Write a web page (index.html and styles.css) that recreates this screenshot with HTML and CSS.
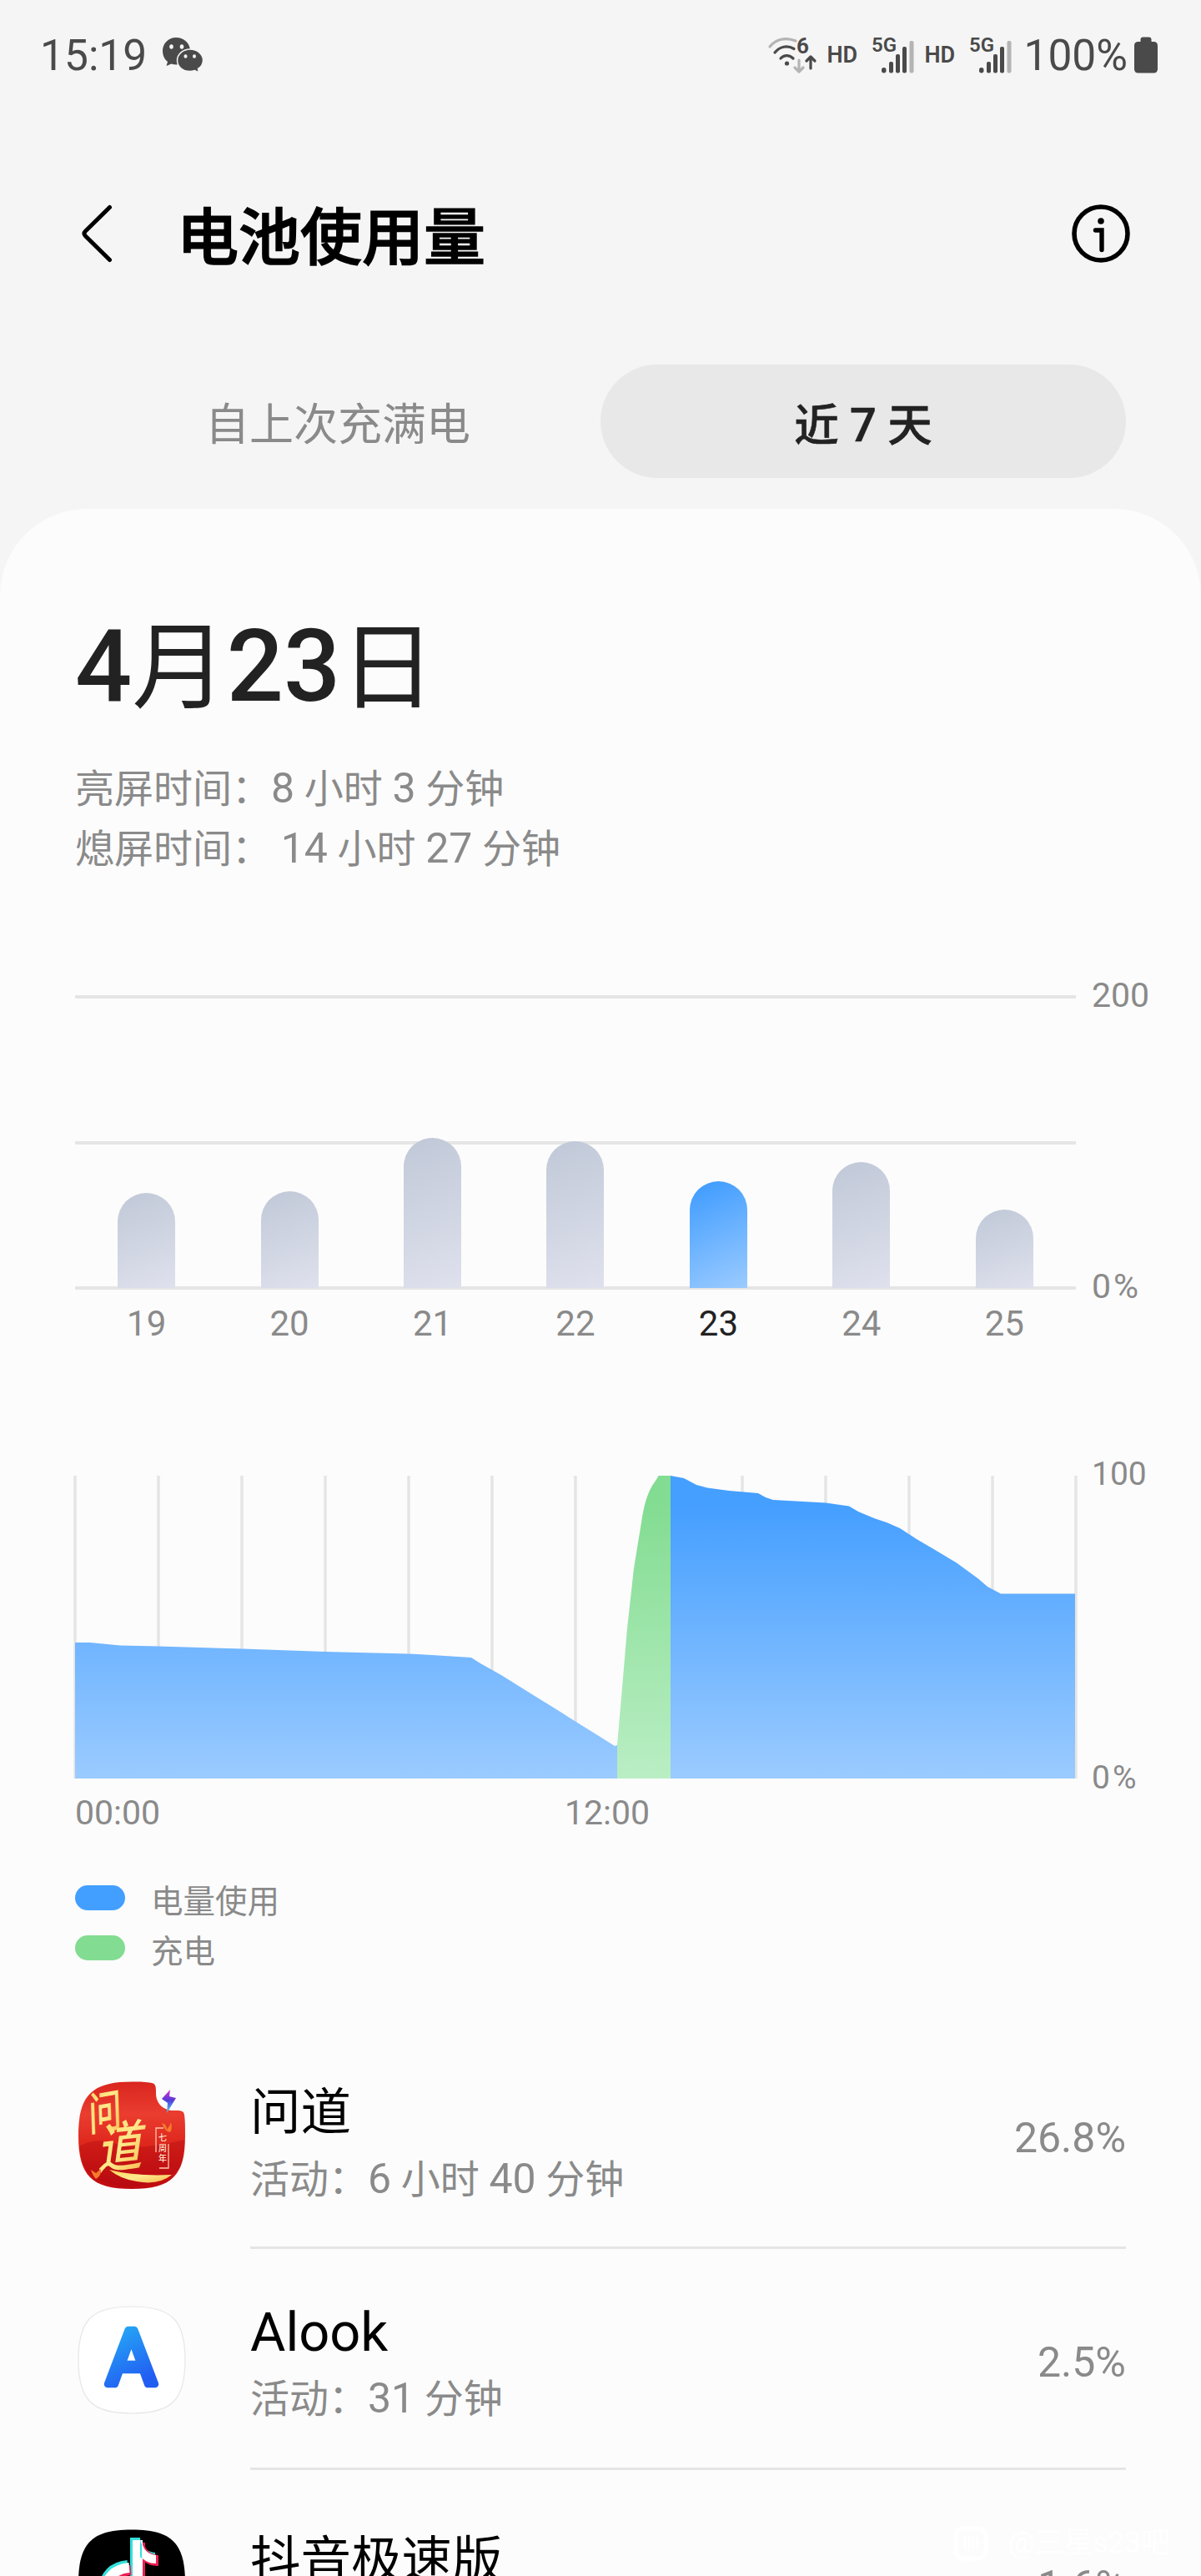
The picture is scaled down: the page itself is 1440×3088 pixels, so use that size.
FILE: index.html
```html
<!DOCTYPE html>
<html lang="zh-CN">
<head>
  <meta charset="UTF-8">
  <title>电池使用量</title>
  <meta name="viewport" content="width=device-width, initial-scale=1.0">
  <link rel="stylesheet" href="styles.css">
</head>
<body>

<div class="screen">

  <!-- Status bar -->
  <div class="status-bar">
    <span class="time">15:19</span>
    <svg class="wechat" width="50" height="44" viewBox="0 0 50 44">
      <path d="M17 1C8 1 1 8 1 17c0 5 2 10 6 13l-1.500 5 6-2.500c2 .7 4 1 6 1C27 33 34 26 34 17S27 1 17 1z" fill="#4a4a4a"/>
      <path d="M34 15c-8.500 0-15.500 6-15.500 13.500S25 41.500 33.500 41.500c2 0 4-.3 6-1l5 2.500-1-4.500c4-2.500 6-6 6-10.500C49.500 21 42.500 15 34 15z" fill="#4a4a4a" stroke="#f5f5f5" stroke-width="1.500"/>
      <g fill="#f5f5f5">
        <ellipse cx="11.500" cy="12" rx="2.300" ry="2.700"/>
        <ellipse cx="24" cy="12" rx="2.300" ry="2.700"/>
        <ellipse cx="28.500" cy="23.500" rx="2" ry="2.300"/>
        <ellipse cx="39" cy="23.500" rx="2" ry="2.300"/>
      </g>
    </svg>
    <div class="status-right">
      <svg class="wifi" width="58" height="44" viewBox="0 0 58 44" fill="none" stroke-width="3.200" stroke-linecap="round" stroke-linejoin="round">
        <path d="M2 12C9 3 21 0 33 5" stroke="#b4b4b4"/>
        <path d="M8 19c6-7.500 15-9 23-4.500M15 26c4-4.500 10.500-4.500 15 0" stroke="#4a4a4a"/>
        <circle cx="22.500" cy="32" r="2.600" fill="#4a4a4a"/>
        <path d="M37 28v14M32 37l5 5 5-5" stroke="#b4b4b4"/>
        <path d="M51 38V25M46 29l5-5 5 5" stroke="#4a4a4a"/>
        <text class="wifi-num" x="34" y="19.500">6</text>
      </svg>
      <span class="hd">HD</span>
      <svg class="signal" width="50" height="44" viewBox="0 0 50 44">
        <text class="net" x="-1" y="18">5G</text>
        <g fill="#4a4a4a">
          <rect x="11" y="37" width="5.500" height="6.500" rx="2.700"/>
          <rect x="20" y="30" width="5" height="13.500" rx="2"/>
          <rect x="28" y="21" width="5" height="22.500" rx="2"/>
          <rect x="36" y="12" width="5" height="31.500" rx="2"/>
        </g>
        <rect x="44.500" y="5" width="5" height="38.500" rx="2" fill="#b4b4b4"/>
      </svg>
      <span class="hd">HD</span>
      <svg class="signal" width="50" height="44" viewBox="0 0 50 44">
        <text class="net" x="-1" y="18">5G</text>
        <g fill="#4a4a4a">
          <rect x="11" y="37" width="5.500" height="6.500" rx="2.700"/>
          <rect x="20" y="30" width="5" height="13.500" rx="2"/>
          <rect x="28" y="21" width="5" height="22.500" rx="2"/>
          <rect x="36" y="12" width="5" height="31.500" rx="2"/>
        </g>
        <rect x="44.500" y="5" width="5" height="38.500" rx="2" fill="#b4b4b4"/>
      </svg>
      <span class="percent">100%</span>
      <svg class="battery" width="28" height="44" viewBox="0 0 28 44">
        <rect x="7.500" y="0.500" width="13" height="12" rx="3" fill="#4a4a4a"/>
        <rect x="0" y="6" width="28" height="37.500" rx="4.500" fill="#4a4a4a"/>
      </svg>
    </div>
  </div>

  <!-- Header -->
  <header class="header">
    <svg class="back" width="40" height="72" viewBox="0 0 40 72">
      <path d="M36.500 4.500L7.500 33q-3 3 0 6L36.500 67.500" fill="none" stroke="#000" stroke-width="5" stroke-linecap="round"/>
    </svg>
    <h1>电池使用量</h1>
    <svg class="info" width="70" height="70" viewBox="0 0 70 70">
      <circle cx="35" cy="35" r="32" fill="none" stroke="#000" stroke-width="5.600"/>
      <circle cx="35" cy="20" r="3.800" fill="#000"/>
      <path d="M28.500 31H36v23.500" fill="none" stroke="#000" stroke-width="5.400" stroke-linecap="round"/>
    </svg>
  </header>

  <div class="tabs">
    <div class="tab">自上次充满电</div>
    <div class="tab active">近 <span class="num">7</span> 天</div>
  </div>

  <main class="card">
    <h2 class="date"><b>4</b>月<b>23</b>日</h2>
    <div class="summary">
      <div>亮屏时间：<span class="num">8</span> 小时 <span class="num">3</span> 分钟</div>
      <div>熄屏时间： <span class="num">14</span> 小时 <span class="num">27</span> 分钟</div>
    </div>

    <!-- Daily usage -->
    <div class="chart week">
      <div class="plot">
        <div class="bar" style="height:114px"></div>
        <div class="bar" style="height:116px"></div>
        <div class="bar" style="height:180px"></div>
        <div class="bar" style="height:176px"></div>
        <div class="bar selected" style="height:128px"></div>
        <div class="bar" style="height:151px"></div>
        <div class="bar" style="height:94px"></div>
      </div>
      <div class="axis"><span>200</span><span class="zero">0%</span></div>
    </div>
    <div class="days">
      <span>19</span><span>20</span><span>21</span><span>22</span><span class="selected">23</span><span>24</span><span>25</span>
    </div>

    <!-- Battery level -->
    <div class="chart level">
      <svg width="1204" height="363" viewBox="-2 0 1204 363">
        <defs>
          <linearGradient id="blue" gradientUnits="userSpaceOnUse" x1="0" y1="0" x2="0" y2="363">
            <stop offset="0.100" stop-color="#459fff"/>
            <stop offset="1" stop-color="#9bcbff"/>
          </linearGradient>
          <linearGradient id="green" gradientUnits="userSpaceOnUse" x1="0" y1="0" x2="0" y2="363">
            <stop offset="0.080" stop-color="#82dc91"/>
            <stop offset="1" stop-color="#baeec4"/>
          </linearGradient>
        </defs>
        <path d="M0 0V363M100 0V363M200 0V363M300 0V363M400 0V363M500 0V363M600 0V363M700 0V363M800 0V363M900 0V363M1000 0V363M1100 0V363M1200 0V363" stroke="#e5e5e5" stroke-width="3.500"/>
        <path fill="url(#blue)" d="M0 363V200H18L54 203.500 100 204.500 201 207.500 300 211 400 213.500 428 215 475 218 486 225 511 239 551 264 577 280 599 294 628 312 647 324 650 323V363z"/>
        <path fill="url(#green)" d="M650 363V323L656 254 662 183 670 111 679 56Q683 27 692 12L700 0H714V363z"/>
        <path fill="url(#blue)" d="M714 363V0L730 3 745 11 758 14.500 784 18 819 21 828 26 837 29 900 32.500 928 36.500 939 43 958 51 973 56 989 63 1009 76 1032 89.500 1057 104.500 1083 123.500 1094 133 1110 141.500H1199V363z"/>
      </svg>
      <div class="axis"><span>100</span><span class="zero">0%</span></div>
    </div>
    <div class="hours"><span>00:00</span><span>12:00</span></div>

    <div class="legend">
      <div><i class="pill use"></i><span>电量使用</span></div>
      <div><i class="pill charge"></i><span>充电</span></div>
    </div>

    <!-- Apps -->
    <ul class="apps">
      <li>
        <svg class="app-icon" width="130" height="130" viewBox="0 0 130 130">
          <defs>
            <linearGradient id="red" x1="0" y1="0" x2="0" y2="1">
              <stop offset="0" stop-color="#d9261f"/>
              <stop offset="0.300" stop-color="#ea3d30"/>
              <stop offset="0.650" stop-color="#dc2218"/>
              <stop offset="1" stop-color="#bd0a10"/>
            </linearGradient>
            <linearGradient id="gold" x1="0" y1="0" x2="1" y2="1">
              <stop offset="0" stop-color="#fbd65d"/>
              <stop offset="0.500" stop-color="#ffe98c"/>
              <stop offset="1" stop-color="#f8b94c"/>
            </linearGradient>
            <linearGradient id="bolt" x1="0" y1="0" x2="0" y2="1">
              <stop offset="0" stop-color="#e32ad0"/>
              <stop offset="0.450" stop-color="#553bd8"/>
              <stop offset="1" stop-color="#42d7fa"/>
            </linearGradient>
          </defs>
          <path fill="url(#red)" d="M65 .5C76 .5 82 .6 89 2c5 1 5 5 5 12C94 27 103 35 116 35c8 0 11 0 12 5 1 8 1 14 1 25 0 48-16 64-64 64S1 113 1 65 17 .5 65 .5z"/>
          <path d="M2 78q20-12 45-3t81-5q1 20-5 34-20 20-60 22-50-1-58-32z" fill="#a80710" opacity=".35"/>
          <text class="brush" transform="translate(14 60) rotate(-10) skewX(-8) scale(.8 1.080)" font-size="50">问</text>
          <text class="brush" transform="translate(24 105) rotate(-6) skewX(-14) scale(.9 1.080)" font-size="60">道</text>
          <path d="M38 106q30 8 75 6-16 13-42 8-20-3-33-14z" fill="url(#gold)"/>
          <path d="M101 50q6 1 6 8 4-5 5-9 2 8-1 12-6 0-10-11zM16 106l6 4 6-5q1 8-6 12-4-4-6-11z" fill="#f77a2c"/>
          <path d="M94 85V56h9M98 104h11V75" fill="none" stroke="#ffc8ac" stroke-width="1.300"/>
          <text class="mini" x="97" y="71">七</text>
          <text class="mini" x="97" y="84">周</text>
          <text class="mini" x="97" y="96">年</text>
          <path fill="url(#bolt)" d="M111 10l-1 8 8 2-11 18 1-12-7-5z"/>
        </svg>
        <div class="body">
          <div class="text">
            <div class="name">问道</div>
            <div class="sub">活动：<span class="num">6</span> 小时 <span class="num">40</span> 分钟</div>
          </div>
          <div class="value">26.8%</div>
        </div>
      </li>
      <li class="latin">
        <svg class="app-icon" width="130" height="130" viewBox="0 0 130 130">
          <defs>
            <linearGradient id="alook" x1="0" y1="0" x2="0.300" y2="1">
              <stop offset="0.150" stop-color="#25aef6"/>
              <stop offset="0.900" stop-color="#225df2"/>
            </linearGradient>
          </defs>
          <path d="M65 1c48 0 64 16 64 64s-16 64-64 64S1 113 1 65 17 1 65 1z" fill="#fff" stroke="#e6e6e6" stroke-width="1.200"/>
          <text class="alook-a" x="64.500" y="93.500" text-anchor="middle">A</text>
        </svg>
        <div class="body">
          <div class="text">
            <div class="name">Alook</div>
            <div class="sub">活动：<span class="num">31</span> 分钟</div>
          </div>
          <div class="value">2.5%</div>
        </div>
      </li>
      <li>
        <svg class="app-icon" width="130" height="130" viewBox="0 0 130 130">
          <path d="M65 .5c48 0 64 16 64 64s-16 64-64 64S1 112.500 1 64.500 17 .5 65 .5z" fill="#000"/>
          <g fill="none" stroke-width="12">
            <path d="M60 43c-38 3-34 50-8 48 12-1 17-10 17-20V10" stroke="#34e0dc"/>
            <path d="M64 49c-38 3-34 50-8 48 12-1 19-10 19-20V16" stroke="#ee1d52"/>
            <path d="M62 46c-38 3-34 50-8 48 12-1 18-10 18-20V13" stroke="#fff"/>
          </g>
          <path d="M75 11c1 10 8 16 18 17v12c-9 0-14-3-18-7z" fill="#34e0dc"/>
          <path d="M79 14c2 11 8 16 18 17v13c-9 0-14-3-18-6z" fill="#ee1d52"/>
          <path d="M77 13c1 11 7 17 17 18v10c-8 0-13-3-17-7z" fill="#fff"/>
        </svg>
        <div class="body">
          <div class="text">
            <div class="name">抖音极速版</div>
          </div>
          <div class="value">1.6%</div>
        </div>
      </li>
    </ul>
  </main>

  <div class="watermark">
    <svg width="42" height="42" viewBox="0 0 42 42">
      <rect x="3" y="3" width="36" height="36" rx="9" fill="none" stroke="#fff" stroke-width="5"/>
      <path d="M14 12v16M19 12v18M24 12v16M28 12v16M24 20h8" stroke="#fff" stroke-width="1.500"/>
    </svg>
    <span>@三星s23吧</span>
  </div>
</div>

</body>
</html>
```
FILE: styles.css
```css
* { box-sizing: border-box; }
body {
  font-family: Roboto, "Noto Sans CJK SC", sans-serif;
  margin: 0;
  padding: 0;
  background: #f5f5f5;
  color: #000;
}
svg {
  display: block;
  flex: none;
}
.screen {
  position: relative;
  width: 1440px;
  height: 3088px;
  overflow: hidden;
}
.num { line-height: 1; }

/* status bar */
.status-bar {
  display: flex;
  align-items: center;
  height: 132px;
  padding: 0 52px 0 48px;
  color: #4a4a4a;
}
.time, .percent {
  font-size: 51.500px;
  line-height: 60px;
  padding-top: 1px;
}
.wechat { margin-left: 18px; }
.status-right {
  display: flex;
  align-items: center;
  margin-left: auto;
}
.hd {
  width: 38px;
  margin: 0 17px 0 12px;
  font-size: 27px;
  font-weight: 600;
  line-height: 30px;
}
.signal, .wifi { overflow: visible; }
.net {
  font-size: 24px;
  font-weight: 600;
  fill: #4a4a4a;
}
.wifi-num {
  font-size: 26px;
  font-weight: 700;
  fill: #4a4a4a;
  stroke: none;
}
.percent { margin-left: 14px; }
.battery { margin-left: 8px; }

/* header */
.header {
  display: flex;
  align-items: center;
  height: 296px;
  padding: 0 85px 0 95px;
}
.header h1 {
  margin: 0 auto 0 77px;
  padding-top: 12px;
  font-size: 74px;
  font-weight: 500;
  line-height: 100px;
  -webkit-text-stroke: 1.500px #000;
}
.tabs {
  display: flex;
  margin: 9px 90px 37px;
}
.tab {
  flex: 1;
  height: 136px;
  padding-top: 12px;
  border-radius: 68px;
  font-size: 53px;
  line-height: 123px;
  text-align: center;
  color: #8a8a8a;
}
.tab.active {
  background: #e8e8e8;
  color: #222;
  font-size: 53.500px;
  font-weight: 500;
  -webkit-text-stroke: 0.600px #222;
}
.tab .num { font-size: 56px; }

/* card */
.card {
  height: 2600px;
  padding: 122px 90px 0;
  border-radius: 104px 104px 0 0;
  background: #fcfcfc;
}
.date {
  margin: 0;
  font-size: 113.500px;
  font-weight: 400;
  line-height: 140px;
  color: #222;
}
.date b {
  font-size: 120px;
  font-weight: 500;
  line-height: 1;
}
.summary {
  margin-top: 38px;
  font-size: 47px;
  line-height: 72px;
  color: #8a8a8a;
}
.summary .num, .sub .num { font-size: 50px; }

/* charts */
.chart {
  display: flex;
  margin-right: -90px;
}
.week { margin-top: 139px; }
.plot {
  display: flex;
  justify-content: space-around;
  align-items: flex-end;
  width: 1200px;
  height: 353px;
  padding-bottom: 2px;
  background:
    linear-gradient(#e5e5e5, #e5e5e5) 0 0 / 100% 4px no-repeat,
    linear-gradient(#e5e5e5, #e5e5e5) 0 50% / 100% 4px no-repeat,
    linear-gradient(#e5e5e5, #e5e5e5) 0 100% / 100% 4px no-repeat;
}
.bar {
  width: 69px;
  border-radius: 35px 35px 0 0;
  background: linear-gradient(160deg, #c0c8d7, #dfe1ed);
}
.bar.selected { background: linear-gradient(155deg, #459fff 10%, #9bcbff); }
.axis {
  display: flex;
  flex-direction: column;
  justify-content: space-between;
  margin: -21px 0 -17px 19px;
  font-size: 41px;
  line-height: 42px;
  color: #8a8a8a;
}
.zero { letter-spacing: 3px; }
.days {
  display: flex;
  width: 1200px;
  margin-top: 20px;
  font-size: 42px;
  line-height: 42px;
  color: #8a8a8a;
  text-align: center;
}
.days span { flex: 1; }
.days .selected { color: #222; }
.level {
  margin-top: 161px;
  margin-left: -2px;
}
.level .axis {
  margin: -23px 0 -20px 17px;
  font-size: 39px;
}
.hours {
  display: grid;
  grid-template-columns: 587px 1fr;
  margin: 20px 0 0;
  font-size: 41px;
  line-height: 43px;
  color: #8a8a8a;
}

.legend {
  margin-top: 50px;
  font-size: 38.500px;
  line-height: 52px;
  color: #8a8a8a;
}
.legend div {
  display: flex;
  align-items: center;
  gap: 31px;
  height: 60px;
}
.legend span { padding-top: 9px; }
.pill {
  width: 60px;
  height: 30px;
  border-radius: 15px;
}
.use { background: #429fff; }
.charge { background: #82dc91; }

/* app list */
.apps {
  margin: 59px 0 0;
  padding: 0;
  list-style: none;
}
.apps li {
  display: flex;
  align-items: center;
  height: 272px;
  padding-left: 3px;
}
.apps .latin { height: 265px; }
.body {
  display: flex;
  flex: 1;
  align-items: center;
  justify-content: space-between;
  height: 100%;
  margin-left: 77px;
  border-bottom: 3px solid #e5e5e5;
}
.text {
  align-self: flex-start;
  padding-top: 69px;
}
.latin .text { padding-top: 60px; }
.name {
  margin-bottom: 4px;
  font-size: 60.500px;
  line-height: 80px;
}
.latin .name { font-size: 65px; }
.sub {
  font-size: 47px;
  line-height: 72px;
  color: #8a8a8a;
}
.value {
  padding-top: 9px;
  font-size: 50px;
  line-height: 60px;
  color: #8a8a8a;
}
.brush {
  font-family: "Noto Sans CJK SC", sans-serif;
  font-weight: 500;
  fill: url(#gold);
}
.mini {
  font-family: "Noto Sans CJK SC", sans-serif;
  font-size: 10px;
  font-weight: 500;
  fill: #ffe0cc;
}
.alook-a {
  font-size: 91px;
  font-weight: 400;
  fill: url(#alook);
  stroke: url(#alook);
  stroke-width: 8.500px;
  stroke-linejoin: round;
}

.watermark {
  position: absolute;
  left: 1143px;
  top: 3028px;
  display: flex;
  align-items: center;
  gap: 24px;
  font-size: 35px;
  line-height: 42px;
  color: #fff;
}
```
